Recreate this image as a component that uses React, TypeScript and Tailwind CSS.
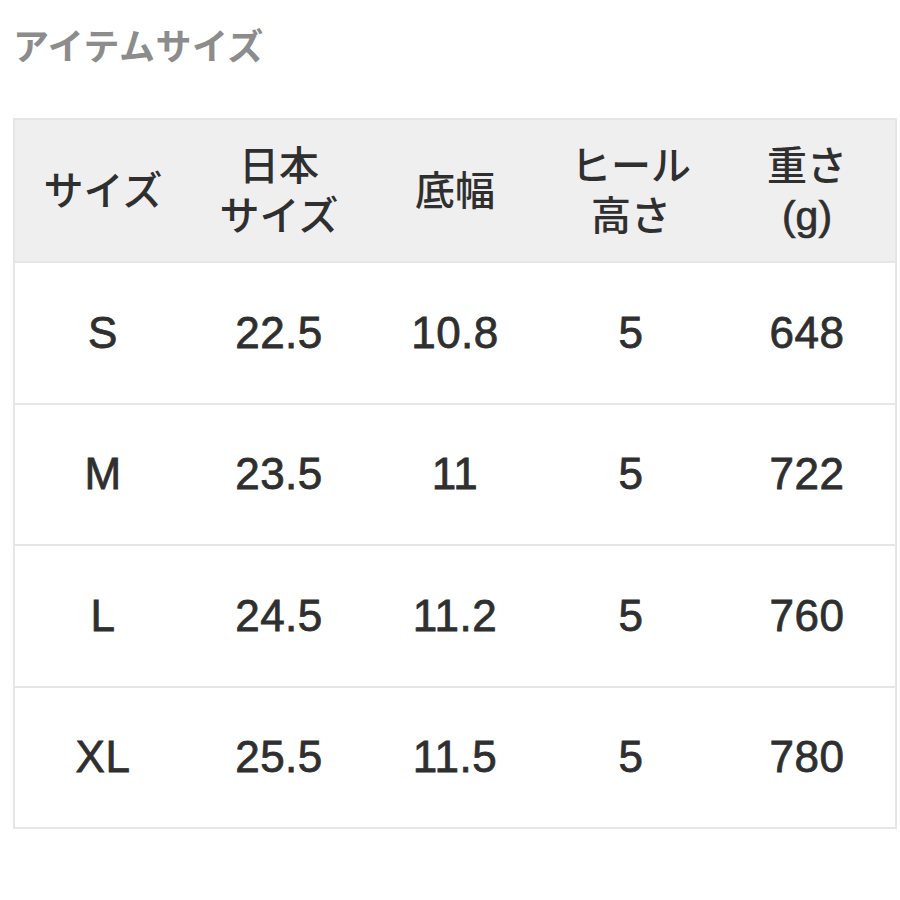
import React from "react";

const rows = [
  ["S", "22.5", "10.8", "5", "648"],
  ["M", "23.5", "11", "5", "722"],
  ["L", "24.5", "11.2", "5", "760"],
  ["XL", "25.5", "11.5", "5", "780"],
];

const headers: string[][] = [
  ["サイズ"],
  ["日本", "サイズ"],
  ["底幅"],
  ["ヒール", "高さ"],
  ["重さ", "(g)"],
];

export default function App() {
  return (
    <div
      className="w-[900px] h-[900px] bg-white pl-[13px] pr-[4px] pt-[26px]"
      style={{ fontFamily: '"Liberation Sans", "Noto Sans CJK JP", sans-serif' }}
    >
      <div className="text-[36px] leading-[44px] font-bold text-[#8c8c8c] tracking-[0.5px]">アイテムサイズ</div>
      <div className="mt-[48px] w-[884px] border-2 border-[#e6e6e6] text-[#2f2f2f]">
        <div className="grid grid-cols-5 h-[141px] bg-[#efefef]">
          {headers.map((h, i) => (
            <div key={i} className="flex flex-col items-center justify-center text-[40px] leading-[50px] font-medium">
              {h.map((l, j) => (
                <div key={j} className={l === "(g)" ? "[-webkit-text-stroke:0.7px_#2f2f2f] text-[41px]" : ""}>{l}</div>
              ))}
            </div>
          ))}
        </div>
        {rows.map((r, i) => (
          <div key={i} className="grid grid-cols-5 h-[141.5px] border-t-2 border-[#e6e6e6]">
            {r.map((c, j) => (
              <div
                key={j}
                className="flex items-center justify-center text-[44px] tracking-[0.5px] [-webkit-text-stroke:0.8px_#2f2f2f]"
              >
                {c}
              </div>
            ))}
          </div>
        ))}
      </div>
    </div>
  );
}
